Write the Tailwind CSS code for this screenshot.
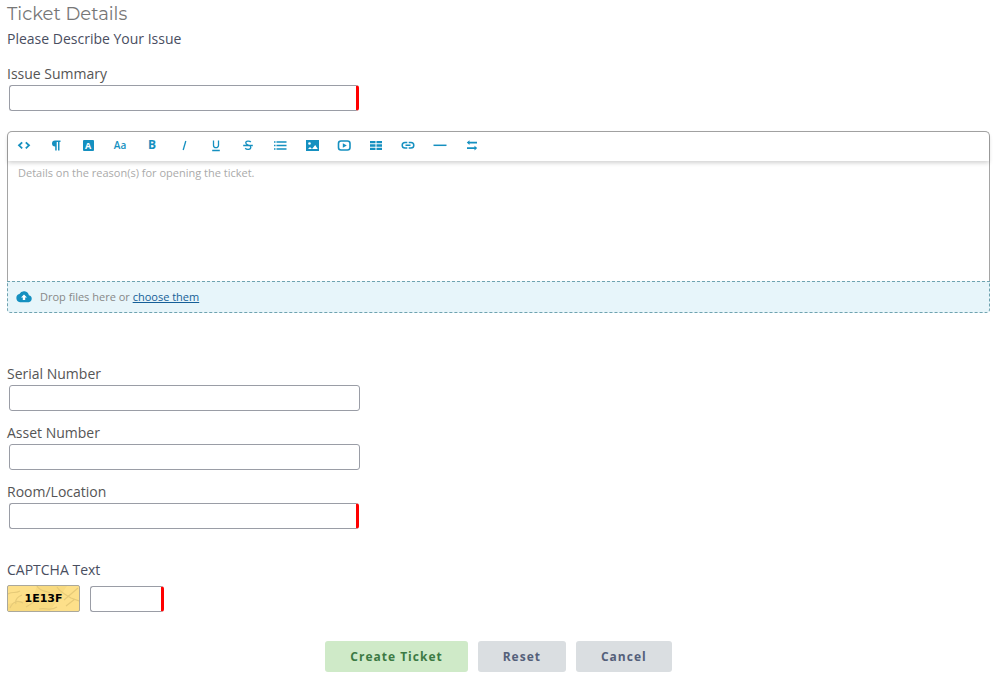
<!DOCTYPE html>
<html lang="en">

<head>
  <meta charset="UTF-8" />
  <meta name="viewport" content="width=device-width, initial-scale=1.0" />
  <title>Open a New Ticket</title>
  <script src="https://cdn.jsdelivr.net/npm/@tailwindcss/browser@4"></script>
</head>

<body class="bg-white font-['Open_Sans','Noto_Sans',sans-serif] text-sm leading-5 text-[#494e5f]">
  <form class="pl-[7px] pr-[13px] pb-4" onsubmit="return false">
    <!-- Heading -->
    <h3 class="pb-px text-[18px] leading-7 text-[#777] font-['Montserrat','Inter',sans-serif] font-normal">Ticket Details</h3>
    <p>Please Describe Your Issue</p>

    <div class="mt-[15px]">
      <label for="summary" class="block text-[#555]">Issue Summary</label>
      <input id="summary" type="text" required
        class="block ml-[2px] mt-px h-[26px] w-[350px] px-2 rounded-[3px] border border-[#9a9da6] border-r-3 border-r-[red] outline-none" />
    </div>

    <!-- Rich text editor -->
    <div class="mt-5">
      <div class="rounded-t-[5px] border border-b-0 border-[#a5a5a5]">
        <div class="flex h-[29px] rounded-t-[5px] pb-1 text-[#1590c0] shadow-[0_2px_4px_rgba(0,0,0,0.18)]">
          <button type="button" title="HTML" class="flex w-8 items-center justify-center">
            <svg class="size-4" viewBox="0 0 16 16" fill="none" stroke="currentColor" stroke-width="1.800"><path d="M6.200 5.300 3 8.300 6.200 11.300M9.800 5.300 13 8.300 9.800 11.300" /></svg>
          </button>
          <button type="button" title="Format" class="flex w-8 items-center justify-center">
            <svg class="size-4" viewBox="0 0 16 16" fill="currentColor"><path d="M7 3.500h5.500V5h-1v8.500H10V5H8.700v8.500H7.200V9.500H7a3 3 0 0 1 0-6z" /></svg>
          </button>
          <button type="button" title="Text color" class="flex w-8 items-center justify-center">
            <span class="mt-px h-[11px] w-[11px] rounded-[1px] bg-[#1590c0] text-center text-[9px] leading-[11px] font-bold text-white">A</span>
          </button>
          <button type="button" title="Font" class="flex w-8 items-center justify-center text-[10px] font-semibold">Aa</button>
          <button type="button" title="Bold" class="flex w-8 items-center justify-center text-[12px] font-bold">B</button>
          <button type="button" title="Italic" class="flex w-8 items-center justify-center">
            <svg class="size-4" viewBox="0 0 16 16" fill="none" stroke="currentColor" stroke-width="1.300"><path d="M9.800 4 7.200 13" /></svg>
          </button>
          <button type="button" title="Underline" class="flex w-8 items-center justify-center">
            <svg class="size-4" viewBox="0 0 16 16" fill="none" stroke="currentColor" stroke-width="1.300"><path d="M5.500 3.500v4.700a2.500 2.500 0 0 0 5 0V3.500M4.200 13.500h7.600" /></svg>
          </button>
          <button type="button" title="Strikethrough" class="flex w-8 items-center justify-center">
            <svg class="size-4" viewBox="0 0 16 16" fill="none" stroke="currentColor" stroke-width="1.300"><path d="M10.800 5C9.800 3.800 5.600 3.600 5.800 6c.2 2.400 5 1.600 5 4.200 0 2.700-4.200 2.600-5.600 1M3.200 8.500h9.600" /></svg>
          </button>
          <button type="button" title="Lists" class="flex w-8 items-center justify-center">
            <svg class="size-4" viewBox="0 0 16 16" fill="none" stroke="currentColor" stroke-width="1.600"><path d="M2 5h1.500M4.500 5h10M2 8.500h1.500M4.500 8.500h10M2 12h1.500M4.500 12h10" /></svg>
          </button>
          <button type="button" title="Image" class="flex w-8 items-center justify-center">
            <svg class="size-4" viewBox="0 0 16 16"><path fill="currentColor" d="M2 3h13v11H2z" /><circle cx="5.500" cy="6.500" r="1.300" fill="#fff" /><path fill="#fff" d="m4 12 2-2 2 2zM8 12l3.200-4 2.600 4z" /></svg>
          </button>
          <button type="button" title="Video" class="flex w-8 items-center justify-center">
            <svg class="size-4" viewBox="0 0 16 16" fill="none" stroke="currentColor" stroke-width="1.600"><rect x="2.500" y="4" width="11.500" height="9" rx="2.500" /><path fill="currentColor" stroke="none" d="m6.800 6.200 4 2.300-4 2.300z" /></svg>
          </button>
          <button type="button" title="Table" class="flex w-8 items-center justify-center">
            <svg class="size-4" viewBox="0 0 16 16" fill="currentColor"><path d="M2 4h5.500v2.300H2zM8.500 4H14v2.300H8.500zM2 7.300h5.500v2.400H2zM8.500 7.300H14v2.400H8.500zM2 10.700h5.500V13H2zM8.500 10.700H14V13H8.500z" /></svg>
          </button>
          <button type="button" title="Link" class="flex w-8 items-center justify-center">
            <svg class="size-4" viewBox="0 0 16 16" fill="none" stroke="currentColor" stroke-width="1.500"><path d="M7.300 5.500H5a2.800 2.800 0 0 0 0 5.600h2.300M8.700 5.500H11a2.800 2.800 0 0 1 0 5.600H8.700M5.500 8.300h5" /></svg>
          </button>
          <button type="button" title="Line" class="flex w-8 items-center justify-center">
            <svg class="size-4" viewBox="0 0 16 16" fill="none" stroke="currentColor" stroke-width="1.500"><path d="M1.500 8.300h13" /></svg>
          </button>
          <button type="button" title="Text direction" class="flex w-8 items-center justify-center">
            <svg class="size-4" viewBox="0 0 16 16" fill="currentColor"><path d="M5.500 3.200v1.500H13v1.700H5.500v1.500L2.800 5.500zM10.500 8.800v1.500H3V12h7.500v1.500l2.700-2.400z" /></svg>
          </button>
        </div>
        <textarea aria-label="Details" placeholder="Details on the reason(s) for opening the ticket."
          class="block h-[120px] w-full resize-none px-[10px] py-1 text-[11px] leading-4 outline-none placeholder:text-[#aaa]"></textarea>
      </div>
      <div class="flex h-8 items-center rounded-b-[4px] border border-dashed border-[#6fa3b0] bg-[#e7f5fa] px-2 text-[11px] text-[#888]">
        <svg class="mr-2 size-4" viewBox="0 0 16 16"><path fill="#1590c0" d="M12.900 6.300A5.100 5.100 0 0 0 3.400 5 4.200 4.200 0 0 0 4 13.200h8.700a3.500 3.500 0 0 0 .2-6.900z" /><path fill="#fff" d="M8 5.400 11 8.600H9.200v2.400H6.800V8.600H5z" /></svg>
        <span>Drop files here or <a href="#" class="text-[#155f98] underline">choose them</a></span>
      </div>
    </div>

    <!-- Custom fields -->
    <div class="mt-[51px] space-y-3">
      <div>
        <label for="serial" class="block text-[#555]">Serial Number</label>
        <input id="serial" type="text" class="block ml-[2px] mt-px h-[26px] w-[351px] px-2 rounded-[3px] border border-[#9a9da6] outline-none" />
      </div>
      <div>
        <label for="asset" class="block text-[#555]">Asset Number</label>
        <input id="asset" type="text" class="block ml-[2px] mt-px h-[26px] w-[351px] px-2 rounded-[3px] border border-[#9a9da6] outline-none" />
      </div>
      <div>
        <label for="room" class="block text-[#555]">Room/Location</label>
        <input id="room" type="text" required
          class="block ml-[2px] mt-px h-[26px] w-[350px] px-2 rounded-[3px] border border-[#9a9da6] border-r-3 border-r-[red] outline-none" />
      </div>
    </div>

    <!-- Captcha -->
    <div class="mt-[31px]">
      <label for="captcha" class="block">CAPTCHA Text</label>
      <div class="mt-[5px] flex items-end gap-[10px]">
        <div class="relative flex h-[27px] w-[73px] items-center justify-center overflow-hidden rounded-[2px] border border-[#aaa89c] bg-[#fde08a]">
          <svg class="absolute inset-0 size-full" viewBox="0 0 71 25" fill="none" stroke="#e6ca78" stroke-width="1.200"><path fill="#f8da80" stroke="none" d="M29 0h30L42 25H20zM0 18l18-4 6 11H0z" /><path d="M0 8c5-3 7 0 12-3M2 22c3-7 8-8 13-5M14 9c-5 2-7 5-6 9M29 0c3 6 8 4 13 7M31 23c8-2 10 3 18-2M49 1c3 5 9 8 14 11l8 3M70 2 56 14M58 20l9-7M18 21l8-5" /></svg>
          <span class="relative font-['DejaVu_Sans',sans-serif] text-[11px] font-bold text-black">1E13F</span>
        </div>
        <input id="captcha" type="text" required
          class="block h-[26px] w-[74px] px-2 rounded-[3px] border border-[#9a9da6] border-r-3 border-r-[red] outline-none" />
      </div>
    </div>

    <!-- Actions -->
    <div class="mt-[29px] flex justify-center gap-[10px] text-xs font-bold tracking-[1px]">
      <button type="submit" class="h-[31px] rounded-[3px] bg-[#cfeac8] px-[25px] text-[#3c7a44]">Create Ticket</button>
      <button type="reset" class="h-[31px] rounded-[3px] bg-[#dadee1] px-[25px] text-[#54607a]">Reset</button>
      <button type="button" class="h-[31px] rounded-[3px] bg-[#dadee1] px-[25px] text-[#54607a]">Cancel</button>
    </div>
  </form>
</body>

</html>
